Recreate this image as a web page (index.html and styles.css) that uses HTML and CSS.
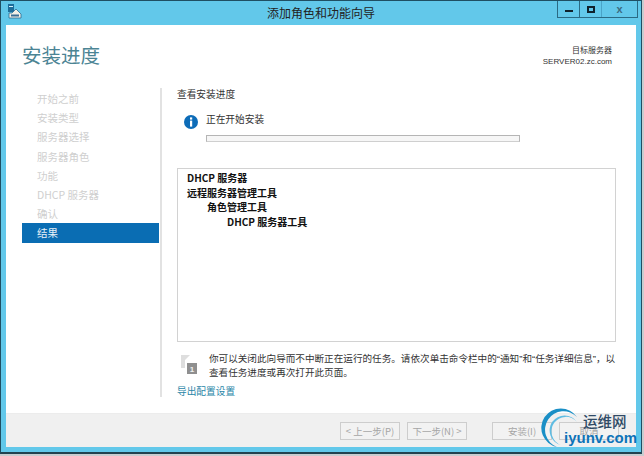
FILE: index.html
```html
<!DOCTYPE html>
<html lang="zh">
<head>
<meta charset="utf-8">
<title>添加角色和功能向导</title>
<link rel="stylesheet" href="styles.css">
</head>
<body>
<div class="window">
  <header class="titlebar">
    <svg class="app-icon" width="14" height="15" viewBox="0 0 14 15"><rect x="0" y="0" width="6" height="8" fill="#1d6d9a"/><rect x="1" y="2" width="4" height="1" fill="#d8f2fb"/><path d="M1 14V9h3l4-4 5 5v4z" fill="#f1efe6" stroke="#2b6a90" stroke-width=".8"/><rect x="3" y="10.5" width="8" height="2" fill="#3a6f96"/></svg>
    <div class="title">添加角色和功能向导</div>
    <div class="controls">
      <div class="ctl ctl-min"><span class="min-glyph"></span></div>
      <div class="ctl ctl-max"><span class="max-glyph"></span></div>
      <div class="ctl ctl-close">x</div>
    </div>
  </header>
  <main class="client">
    <div class="top">
      <h1 class="heading">安装进度</h1>
      <div class="target"><div>目标服务器</div><div>SERVER02.zc.com</div></div>
    </div>
    <div class="body">
      <nav class="nav">
        <div class="nav-item">开始之前</div>
        <div class="nav-item">安装类型</div>
        <div class="nav-item">服务器选择</div>
        <div class="nav-item">服务器角色</div>
        <div class="nav-item">功能</div>
        <div class="nav-item">DHCP 服务器</div>
        <div class="nav-item">确认</div>
        <div class="nav-item active">结果</div>
      </nav>
      <section class="content">
        <div class="sub">查看安装进度</div>
        <div class="status">
          <svg class="info" width="14" height="14" viewBox="0 0 14 14"><circle cx="7" cy="7" r="7" fill="#0d6cb8"/><rect x="6" y="2.4" width="2.2" height="2.2" fill="#fff"/><rect x="6" y="5.6" width="2.2" height="6" fill="#fff"/></svg>
          <div class="status-main">
            <div class="status-text">正在开始安装</div>
            <div class="progress"></div>
          </div>
        </div>
        <div class="listbox">
          <div class="li">DHCP 服务器</div>
          <div class="li">远程服务器管理工具</div>
          <div class="li l2">角色管理工具</div>
          <div class="li l3">DHCP 服务器工具</div>
        </div>
        <div class="note">
          <svg class="flag" width="18" height="21" viewBox="0 0 18 21"><path d="M1 1 L10 1 L5 6 L5 14 L1 14z" fill="#dedede"/><rect x="7" y="9" width="10" height="11" fill="#8f8f8f"/><text x="12" y="18" class="flag-num">1</text></svg>
          <p class="note-text">你可以关闭此向导而不中断正在运行的任务。请依次单击命令栏中的“通知”和“任务详细信息”，以查看任务进度或再次打开此页面。</p>
        </div>
        <div class="link">导出配置设置</div>
      </section>
    </div>
    <footer class="footer">
      <div class="btn">&lt; 上一步(P)</div>
      <div class="btn">下一步(N) &gt;</div>
      <div class="btn btn-install">安装(I)</div>
      <div class="btn">取消</div>
    </footer>
  </main>
  <div class="watermark">
    <svg class="wm-arc" width="46" height="46" viewBox="0 0 46 46"><path d="M36 9 A19.5 19.5 0 1 0 16 39 A18.5 18.5 0 1 1 36 9z" fill="#1a8fc6"/><path d="M36 14 A15 15 0 1 0 20 37 A14.5 14.5 0 1 1 36 14z" fill="#5fbce2"/></svg>
    <div class="wm-cn">运维网</div>
    <div class="wm-en">iyunv.com</div>
  </div>
</div>
</body>
</html>
```
FILE: styles.css
```css
* { box-sizing: border-box; }
html, body { margin: 0; padding: 0; }
body {
  width: 644px; height: 456px; background: #c9cdd0; overflow: hidden;
  font-family: "Noto Sans CJK SC", "Liberation Sans", sans-serif;
  color: #333;
}
.window {
  position: relative; width: 642px; height: 454px; background: #62c8ea;
  border: 1px solid #1f4f63; border-bottom: 2px solid #22424f;
  padding: 0 5px 5px 5px; display: flex; flex-direction: column;
}
.titlebar { height: 24px; flex: none; display: flex; align-items: center; position: relative; }
.app-icon { margin: 0 0 3px 2px; flex: none; }
.title {
  position: absolute; left: 0; right: 0; top: 4px; text-align: center;
  font-size: 12px; line-height: 15px; color: #222;
}
.controls { position: absolute; right: -2px; top: 0; display: flex; height: 17px; border: 1px solid #2a6a84; border-top: none; }
.ctl { height: 16px; display: flex; align-items: center; justify-content: center; }
.ctl-min { width: 22px; border-right: 1px solid #2a6a84; }
.ctl-max { width: 21px; }
.ctl-close { width: 36px; border-left: 1px solid #4aa4c8; font-size: 11px; font-weight: bold; color: #3b6b80; line-height: 14px; font-family: "Liberation Sans", sans-serif; }
.min-glyph { width: 8px; height: 2px; background: #10222c; margin-top: 4px; }
.max-glyph { width: 8px; height: 7px; border: 2px solid #10222c; }
.client { flex: 1; background: #fff; display: flex; flex-direction: column; min-height: 0; }
.top { height: 63px; flex: none; display: flex; justify-content: space-between; padding: 17px 24px 0 16px; }
.heading { margin: 0; font-size: 19.5px; line-height: 26px; font-weight: 400; color: #4b8494; }
.target { font-size: 8px; line-height: 10.5px; text-align: right; color: #333; padding-top: 4px; font-family: "Liberation Sans", "Noto Sans CJK SC", sans-serif; }
.body { flex: 1; display: flex; min-height: 0; }
.nav { width: 137px; margin-left: 16px; flex: none; padding-top: 1px; }
.nav-item { height: 19.2px; line-height: 19px; font-size: 10.5px; padding-left: 15px; color: #cfcfcf; }
.nav-item.active { background: #0a6db3; color: #e8f1f8; }
.content {
  width: 457px; margin-left: 1px; border-left: 2px solid #e2e2e2; padding-left: 15px; height: 309px; flex: none;
  display: flex; flex-direction: column;
}
.sub { font-size: 9.7px; line-height: 12px; color: #333; }
.status { display: flex; margin: 10px 0 0 7px; height: 39px; }
.info { margin-top: 5px; flex: none; }
.status-main { margin-left: 8px; }
.status-text { font-size: 9.7px; line-height: 12px; margin-top: 3px; color: #333; }
.progress { width: 314px; height: 7px; margin-top: 10px; border: 1px solid #b5b5b5; border-bottom-color: #cfcfcf; background: #f6f6f6; }
.listbox { width: 439px; height: 174px; margin-top: 20px; border: 1px solid #d2d2d2; padding: 2px 9px; flex: none; }
.li { font-size: 10px; line-height: 14.5px; font-weight: 700; color: #111; }
.l2 { padding-left: 20px; }
.l3 { padding-left: 40px; }
.note { display: flex; margin-top: 10px; padding-left: 3px; }
.flag { flex: none; margin-top: 2px; }
.flag-num { font-size: 8px; font-weight: 700; fill: #f0f0f0; text-anchor: middle; font-family: "Liberation Sans", sans-serif; }
.note-text { width: 412px; margin: 0 0 0 11px; font-size: 9.6px; line-height: 14px; color: #333; font-family: "Liberation Sans", "Noto Sans CJK SC", sans-serif; }
.link { font-size: 9.7px; line-height: 12px; color: #2a86a8; margin-top: 5px; }
.footer {
  height: 34px; flex: none; background: #f0f0f0; display: flex; align-items: flex-start; padding: 8px 0 0 334px; gap: 7px;
  border-top: 1px solid #ececec; margin-top: auto;
}
.btn {
  width: 60px; height: 18px; border: 1px solid #cdcdcd; background: #f2f2f2; color: #a5a5a5;
  font-size: 9.5px; line-height: 16px; text-align: center;
}
.btn-install { margin-left: 18px; }
.watermark { position: absolute; left: 541px; top: 408px; width: 103px; height: 46px; }
.wm-arc { position: absolute; left: -1px; top: -1px; }
.wm-cn { position: absolute; left: 41px; top: 2px; font-size: 14.5px; line-height: 20px; color: #2f4a66; font-weight: 500; }
.wm-en { position: absolute; left: 22px; top: 20px; font-size: 15px; line-height: 18px; font-weight: 700; color: #0d73b8; font-family: "Liberation Sans", sans-serif; }
```
